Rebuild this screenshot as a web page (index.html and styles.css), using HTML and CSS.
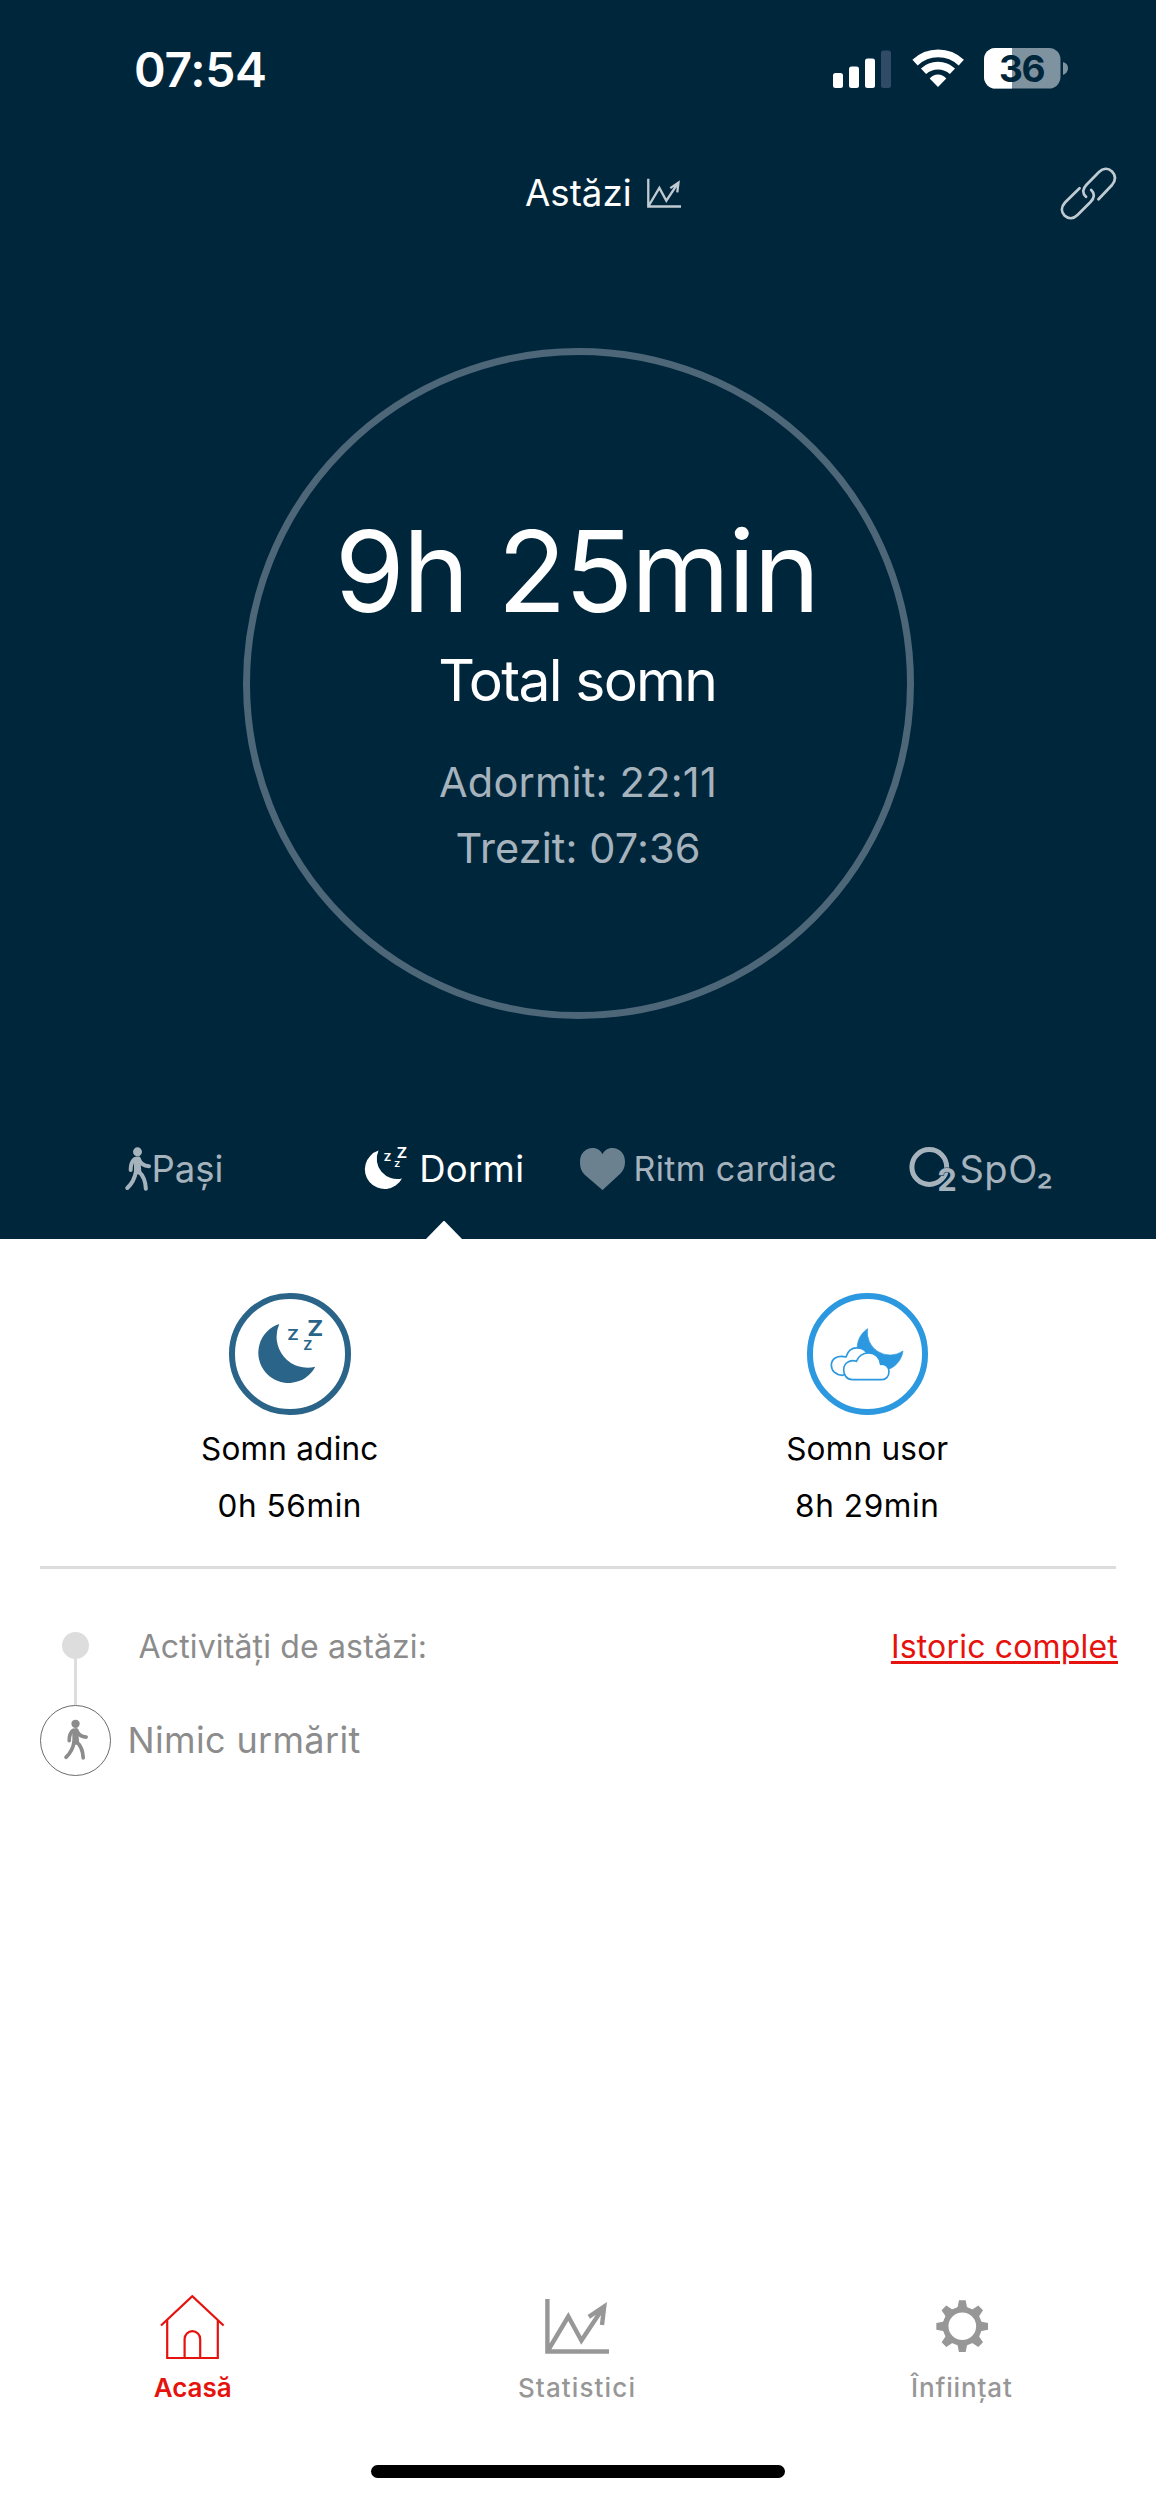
FILE: index.html
```html
<!DOCTYPE html>
<html lang="ro">
<head>
<meta charset="utf-8">
<title>Somn</title>
<link rel="stylesheet" href="styles.css">
</head>
<body>
<svg class="defs" aria-hidden="true">
  <symbol id="walker" viewBox="75 81 78 132">
    <circle cx="112.500" cy="95.500" r="13.500" fill="currentColor"/>
    <path d="M102 113Q111 106 121 114L124 157L114 164L102 157Z" fill="currentColor"/>
    <path d="M104 117Q92 127 92 150M116 116Q124 138 147 138.500M108 154Q103 184 82 204M117 155Q136 172 137.500 206" fill="none" stroke="currentColor" stroke-width="12" stroke-linecap="round" stroke-linejoin="round"/>
  </symbol>
  <symbol id="chart" viewBox="0 0 64 55">
    <path d="M2.400 0V52.500H64M3 51.500L23.300 17.500L36.400 41.500L58 9M43.800 17.800L59.200 7.500L57 26" fill="none" stroke="currentColor" stroke-width="4.400"/>
  </symbol>
</svg>

<main class="phone">
  <section class="hero">
    <div class="status">
      <span class="clock">07:54</span>
      <svg class="signal" viewBox="0 0 60 40" width="60" height="40">
        <g fill="#fff"><rect x="1" y="24" width="10" height="15" rx="2.500"/><rect x="17" y="17.500" width="10" height="21.500" rx="2.500"/><rect x="33" y="9.500" width="10" height="29.500" rx="2.500"/></g>
        <rect x="49" y="1.500" width="10" height="37.500" rx="2.500" fill="#34506a" fill-opacity=".9"/>
      </svg>
      <svg class="wifi" viewBox="335 86 157 116" width="52.300" height="38.600">
        <g fill="none" stroke="#fff">
          <path d="M344 127A101 101 0 0 1 483 127" stroke-width="23"/>
          <path d="M369.500 153A64.500 64.500 0 0 1 456.500 153" stroke-width="23"/>
        </g>
        <path d="M413 200L388 175Q399 163 413 163T438 175Z" fill="#fff"/>
      </svg>
      <svg class="battery" viewBox="0 0 85 41" width="85" height="41">
        <clipPath id="cell"><rect width="76.500" height="40.500" rx="11.500"/></clipPath>
        <g clip-path="url(#cell)"><rect width="77" height="41" fill="#7f929f"/><rect width="28" height="41" fill="#fff"/></g>
        <path d="M79 14Q84 15.500 84 20.300T79 27Z" fill="#7f929f"/>
        <text class="level" x="15" y="33.700">36</text>
      </svg>
    </div>

    <header class="title">
      <h1>Astăzi</h1>
      <svg class="title-chart" width="34" height="30.500"><use href="#chart"/></svg>
      <svg class="link" viewBox="0 0 57 53" width="57" height="53">
        <path d="M38.500 32.300L52 18C56 13 55.500 8 52 4.500C48 .7 43 1 39 5L26.500 17.800C22.500 22 22 26 26 29.800M19.500 21.300L5 35.500C1 40 1 45 4.500 48.500C8.500 52.300 13.500 52 17.500 48L30.500 35C34.500 31 35 26.500 31.200 23" fill="none" stroke="currentColor" stroke-width="2.700" stroke-linecap="round"/>
      </svg>
    </header>

    <div class="ring">
      <div class="total">9h 25min</div>
      <div class="caption">Total somn</div>
      <div class="asleep">Adormit: 22:11</div>
      <div class="awake">Trezit: 07:36</div>
    </div>

    <nav class="tabs">
      <a class="tab steps"><svg width="26" height="44"><use href="#walker"/></svg><span>Pași</span></a>
      <a class="tab sleep active">
        <svg class="open" viewBox="28 27 66 64.500" width="43" height="42">
          <path d="M50.300 31A31 31 0 0 0 86.300 73.700A30.200 30.200 0 1 1 50.300 31Z" fill="currentColor"/>
          <g class="zs">
            <text x="58.300" y="46.700" font-size="15" textLength="11.500" lengthAdjust="spacingAndGlyphs">Z</text>
            <text x="74.300" y="56.600" font-size="12.500" textLength="9" lengthAdjust="spacingAndGlyphs">Z</text>
            <text x="78.300" y="43" font-size="22" textLength="16" lengthAdjust="spacingAndGlyphs">Z</text>
          </g>
        </svg>
        <span>Dormi</span>
      </a>
      <a class="tab heart">
        <svg viewBox="59 83 136 128" width="45" height="42.500"><path d="M127 210L75 165C62 152 59 140 59 124C59 100 76 83 97 83C112 83 122 91 127 102C132 91 142 83 157 83C178 83 195 100 195 124C195 140 190 152 178 163Z" fill="#6b818f"/></svg>
        <span>Ritm cardiac</span>
      </a>
      <a class="tab oxygen">
        <svg class="open" viewBox="0 0 48 44" width="48" height="44"><circle cx="20.300" cy="20" r="17.400" fill="none" stroke="currentColor" stroke-width="5"/><text class="two" x="28.300" y="43.500">2</text></svg>
        <span>SpO₂</span>
      </a>
    </nav>
  </section>

  <section class="phases">
    <div class="phase deep">
      <div class="badge">
        <svg class="open" viewBox="28 27 66 64.500" width="66" height="64.500">
          <path d="M50.300 31A31 31 0 0 0 86.300 73.700A30.200 30.200 0 1 1 50.300 31Z" fill="currentColor"/>
          <g class="zs">
            <text x="58.300" y="46.700" font-size="15" textLength="11.500" lengthAdjust="spacingAndGlyphs">Z</text>
            <text x="74.300" y="56.600" font-size="12.500" textLength="9" lengthAdjust="spacingAndGlyphs">Z</text>
            <text x="78.300" y="43" font-size="22" textLength="16" lengthAdjust="spacingAndGlyphs">Z</text>
          </g>
        </svg>
      </div>
      <div class="name">Somn adinc</div>
      <div class="time">0h 56min</div>
    </div>
    <div class="phase light">
      <div class="badge">
        <svg viewBox="212 175 222 160" width="74" height="53.300">
          <path d="M325 177A68 68 0 0 0 431 244A69 69 0 1 1 325 177Z" fill="#2c98e0" stroke="#2c98e0" stroke-width="2" stroke-linejoin="round"/>
          <g fill="#fff" stroke="#2c98e0" stroke-width="5" stroke-linejoin="round">
            <path d="M250 317C228 316 216 303 216 287C216 268 232 256 260 262C266 242 280 234 295 235C312 236 322 244 326 258L300 300Z"/>
            <path d="M279 330C262 330 253 316 253 300C253 282 270 268 291 275C298 258 312 250 328 250C348 250 362 264 364 284C378 282 389 292 389 306C389 320 380 330 368 330Z"/>
          </g>
        </svg>
      </div>
      <div class="name">Somn usor</div>
      <div class="time">8h 29min</div>
    </div>
  </section>

  <section class="activity">
    <div class="row heading">
      <span class="rail"><i class="dot"></i><i class="stem"></i></span>
      <h2>Activități de astăzi:</h2>
      <a class="history">Istoric complet</a>
    </div>
    <div class="row entry">
      <span class="bubble"><svg width="24" height="41.300"><use href="#walker"/></svg></span>
      <span class="empty">Nimic urmărit</span>
    </div>
  </section>

  <nav class="bottom">
    <a class="item home">
      <span class="pic"><svg viewBox="0 0 65 65" width="65" height="65"><path d="M1 30.500L32.300 1.200L63.600 30.500M7.200 25V63H57.800V25M24.600 63V44A7.800 7.800 0 0 1 40.200 44V63" fill="none" stroke="currentColor" stroke-width="2.200"/></svg></span>
      <span>Acasă</span>
    </a>
    <a class="item stats">
      <span class="pic"><svg width="64" height="55"><use href="#chart"/></svg></span>
      <span>Statistici</span>
    </a>
    <a class="item settings">
      <span class="pic"><svg viewBox="226 90 158 158" width="52.600" height="52.600">
        <circle cx="305" cy="169" r="50" fill="none" stroke="currentColor" stroke-width="17"/>
        <g fill="currentColor">
          <path id="tooth" d="M284 118L291 111L295 91H315L319 111L326 118Z"/>
          <use href="#tooth" transform="rotate(45 305 169)"/><use href="#tooth" transform="rotate(90 305 169)"/><use href="#tooth" transform="rotate(135 305 169)"/><use href="#tooth" transform="rotate(180 305 169)"/><use href="#tooth" transform="rotate(225 305 169)"/><use href="#tooth" transform="rotate(270 305 169)"/><use href="#tooth" transform="rotate(315 305 169)"/>
        </g>
      </svg></span>
      <span>Înființat</span>
    </a>
  </nav>
  <div class="home-bar"></div>
</main>
</body>
</html>
```

FILE: styles.css
```css
* { box-sizing: border-box; }
body { margin: 0; background: #fff; font-family: "Inter", "Liberation Sans", sans-serif; }
h1, h2 { margin: 0; font-weight: 400; }
svg { display: block; flex: none; }
.defs { position: absolute; width: 0; height: 0; }
.open { overflow: visible; }
.zs { font-weight: 700; letter-spacing: 0; fill: currentColor; }

.phone { display: flex; flex-direction: column; width: 1156px; height: 2500px; background: #fff; }

.hero { display: flex; flex-direction: column; height: 1239px; background: #00263c; color: #fff; }

.status { display: flex; align-items: center; height: 137px; padding: 0 87px 0 134px; }
.clock { margin-right: auto; font-size: 48px; font-weight: 600; line-height: 60px; letter-spacing: -.3px; padding-top: 2px; }
.signal { margin-right: 20px; }
.wifi { margin-right: 19.500px; }
.level { font-size: 37px; font-weight: 700; letter-spacing: -1.400px; fill: #00263c; }

.title { display: flex; align-items: center; height: 112px; padding: 0 39px 0 525px; color: #c0cad1; }
.title h1 { color: #fff; font-size: 36.700px; line-height: 48px; }
.title-chart { margin-left: 15.500px; }
.link { margin-left: auto; }

.ring { display: flex; flex-direction: column; align-items: center; align-self: center; width: 671px; height: 671px; margin-top: 99px; padding-top: 149px; border: 7px solid #4d6778; border-radius: 50%; }
.total { font-size: 113px; line-height: 134px; letter-spacing: -2px; margin-left: -3px; }
.caption { margin-top: 9px; font-size: 57px; line-height: 68px; letter-spacing: -1.700px; margin-left: -1.500px; }
.asleep, .awake { color: #a6b3bc; font-size: 41.500px; line-height: 60px; letter-spacing: .2px; }
.asleep { margin-top: 37px; }
.awake { margin-top: 6px; letter-spacing: .1px; }

.tabs { display: grid; grid-template-columns: repeat(4, 270px); justify-content: center; height: 140px; margin-top: auto; }
.tab { position: relative; display: flex; align-items: center; justify-content: center; color: #a6b3bc; font-size: 36.500px; line-height: 48px; padding-left: 2px; }
.tab.active { color: #fff; }
.tab.active::after { content: ""; position: absolute; left: 50%; bottom: -1px; width: 38px; height: 19.500px; margin-left: -18px; background: #fff; clip-path: polygon(50% 0, 100% 100%, 0 100%); }
.steps { gap: 1px; }
.sleep { gap: 12.500px; letter-spacing: .37px; }
.heart { gap: 8.500px; padding: 0 9px 0 0; font-size: 34px; letter-spacing: .34px; }
.oxygen { gap: 2px; padding: 0 3px 0 0; font-size: 38px; letter-spacing: .5px; }
.two { font-size: 31px; font-weight: 700; letter-spacing: 0; fill: currentColor; stroke: #00263c; stroke-width: 1px; paint-order: stroke; }

.phases { display: grid; grid-template-columns: 1fr 1fr; height: 327px; padding: 54px 0 0 1px; color: #000; font-size: 31.500px; }
.phase { display: flex; flex-direction: column; align-items: center; }
.badge { display: flex; width: 121.500px; height: 121.500px; border: 6px solid #2b6489; border-radius: 50%; color: #2b6489; }
.deep .badge { padding: 21px 0 0 22px; }
.light .badge { padding: 29px 0 0 17.500px; border-color: #2c98e0; }
.name { margin-top: 10px; line-height: 48px; letter-spacing: .22px; }
.time { margin-top: 9px; line-height: 48px; letter-spacing: .6px; }

.activity { margin: 0 40px; border-top: 3px solid #ddd; padding-top: 63px; height: 450px; color: #8c8c8c; }
.row { display: flex; }
.heading { height: 73px; }
.rail { display: flex; flex-direction: column; align-items: center; width: 71px; }
.dot { width: 27px; height: 27px; border-radius: 50%; background: #ddd; }
.stem { width: 3px; height: 46px; background: #ddd; }
.heading h2 { margin-left: 27.500px; font-size: 32px; line-height: 30px; letter-spacing: .15px; }
.history { margin: 0 -2px 0 auto; color: #e6120e; font-size: 32px; line-height: 30px; letter-spacing: .18px; text-decoration: underline; text-decoration-thickness: 2.700px; text-underline-offset: 3px; }
.entry { align-items: center; height: 71px; }
.bubble { display: flex; align-items: center; justify-content: center; width: 71px; height: 71px; border: 1.500px solid #6c6c6c; border-radius: 50%; color: #8c8c8c; }
.bubble svg { margin-top: -1px; }
.empty { margin: -1px 0 0 16.500px; font-size: 36px; letter-spacing: .35px; }

.bottom { display: grid; grid-template-columns: repeat(3, 1fr); height: 150px; margin-top: auto; color: #979797; font-size: 26px; font-weight: 500; line-height: 36px; }
.item { display: flex; flex-direction: column; align-items: center; }
.pic { display: flex; align-items: center; height: 65px; margin-bottom: 10px; }
.home { color: #e6120e; font-weight: 600; }
.stats { letter-spacing: 1.130px; padding-right: 2px; }
.settings { letter-spacing: .86px; padding-right: 3px; }
.stats .pic, .settings .pic { padding-bottom: 3px; }

.home-bar { width: 414px; height: 13px; margin: 20px auto 22px; border-radius: 7px; background: #000; }
```
